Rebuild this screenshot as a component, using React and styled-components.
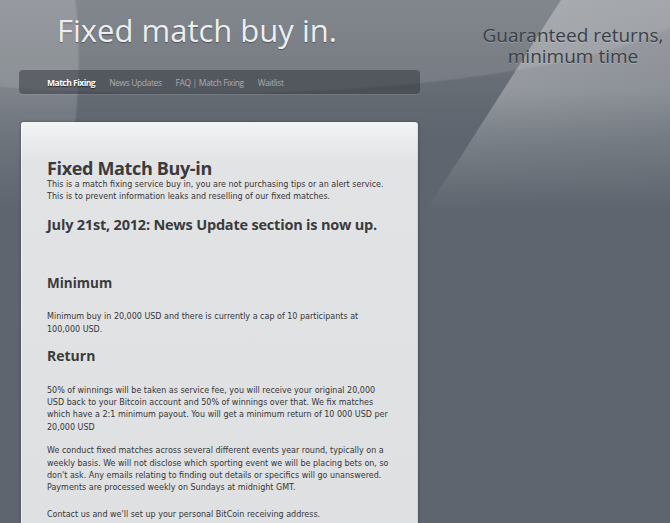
import styled, { createGlobalStyle } from "styled-components"

const GlobalStyle = createGlobalStyle`
  html, body {
    margin: 0;
    padding: 0;
  }
  body {
    min-height: 100vh;
    overflow: hidden;
    background-color: #5e656e;
    background-repeat: no-repeat;
    background-size: 670px 523px;
    background-image:
      linear-gradient(180deg, rgba(94,101,110,0) 0px, rgba(94,101,110,0) 90px, rgba(94,101,110,1) 210px),
      linear-gradient(122.6deg, rgba(255,255,255,0) 0px, rgba(255,255,255,0) 472px, rgba(255,255,255,0.3) 473px, rgba(255,255,255,0.16) 846px),
      radial-gradient(ellipse 520px 105px at 190px -10px, rgba(255,255,255,0.1) 0 98%, rgba(255,255,255,0) 100%),
      radial-gradient(ellipse 90px 230px at -10px 60px, rgba(255,255,255,0.16) 0 97%, rgba(255,255,255,0) 100%),
      linear-gradient(180deg, #747980 0px, #5e656e 140px);
  }
`

const Page = styled.div`
  display: flex;
  align-items: flex-start;
  min-height: 100vh;
`

const MainColumn = styled.div`
  width: 401px;
  margin-left: 19px;
  flex-shrink: 0;
`

const SiteTitle = styled.h1`
  margin: 0;
  padding: 10px 0 0 38px;
  height: 60px;
  box-sizing: border-box;
  font-family: "Open Sans", sans-serif;
  font-weight: 400;
  font-size: 31px;
  line-height: 40px;
  color: #eceef1;
  text-shadow: 0 1px 1px rgba(0, 0, 0, 0.35);
`

const NavBar = styled.nav`
  margin-top: 10px;
  height: 24px;
  display: flex;
  align-items: center;
  gap: 14px;
  padding-left: 28px;
  border-radius: 4px;
  background: rgba(48, 52, 58, 0.5);
  box-shadow: 0 1px 0 rgba(255, 255, 255, 0.08);
`

const NavLink = styled.a`
  font-family: "Open Sans", sans-serif;
  font-size: 8.5px;
  letter-spacing: ${(p) => (p.$active ? "-0.5px" : "-0.4px")};
  color: ${(p) => (p.$active ? "#ffffff" : "#a9adb2")};
  font-weight: ${(p) => (p.$active ? 700 : 400)};
  text-decoration: none;
  text-shadow: ${(p) => (p.$active ? "0 1px 1px rgba(0,0,0,0.6)" : "none")};
`

const Card = styled.section`
  margin: 28px 0 0 2px;
  width: 397px;
  box-sizing: border-box;
  padding: 37px 26px 20px;
  min-height: 420px;
  background: linear-gradient(180deg, #f2f3f4 0px, #e2e3e5 40px, #dfe0e2 100%);
  border-radius: 3px 3px 0 0;
  box-shadow: 0 0 3px rgba(0, 0, 0, 0.35), inset 1px 0 0 rgba(255,255,255,0.6), inset -1px 0 0 rgba(0,0,0,0.06);
  color: #3c3c3c;
`

const Heading = styled.h2`
  margin: 0;
  font-family: "Open Sans", sans-serif;
  font-weight: 700;
  font-size: ${(p) => p.$size || 18}px;
  letter-spacing: ${(p) => p.$spacing || 0}px;
  line-height: 1.1;
  color: #3a3b3d;
  margin-top: ${(p) => p.$top || 0}px;
  margin-bottom: ${(p) => p.$bottom || 0}px;
`

const Text = styled.p`
  margin: 0;
  font-family: "DejaVu Sans", sans-serif;
  font-size: 8px;
  line-height: 12.4px;
  color: #363636;
  margin-bottom: ${(p) => p.$bottom || 0}px;
`

const SideColumn = styled.div`
  flex: 1;
  margin-left: 56px;
  padding-top: 25px;
  text-align: center;
`

const Tagline = styled.p`
  margin: 0;
  font-family: "Open Sans", sans-serif;
  font-size: 19px;
  line-height: 21px;
  color: #3b4047;
  text-shadow: 0 1px 0 rgba(255, 255, 255, 0.22);
`

function App() {
  return (
    <>
      <GlobalStyle />
      <Page>
        <MainColumn>
          <SiteTitle>Fixed match buy in.</SiteTitle>
          <NavBar>
            <NavLink $active>Match Fixing</NavLink>
            <NavLink>News Updates</NavLink>
            <NavLink>FAQ | Match Fixing</NavLink>
            <NavLink>Waitlist</NavLink>
          </NavBar>
          <Card>
            <Heading $size={18} $spacing={-0.35}>Fixed Match Buy-in</Heading>
            <Text>
              This is a match fixing service buy in, you are not purchasing tips or an alert service.
              This is to prevent information leaks and reselling of our fixed matches.
            </Text>
            <Heading $size={14.5} $spacing={-0.2} $top={13}>
              July 21st, 2012: News Update section is now up.
            </Heading>
            <Heading $size={13.5} $top={43} $bottom={21}>Minimum</Heading>
            <Text>
              Minimum buy in 20,000 USD and there is currently a cap of 10 participants at 100,000 USD.
            </Text>
            <Heading $size={14} $top={12} $bottom={21}>Return</Heading>
            <Text $bottom={11}>
              50% of winnings will be taken as service fee, you will receive your original 20,000
              USD back to your Bitcoin account and 50% of winnings over that. We fix matches
              which have a 2:1 minimum payout. You will get a minimum return of 10 000 USD per
              20,000 USD
            </Text>
            <Text $bottom={14}>
              We conduct fixed matches across several different events year round, typically on a
              weekly basis. We will not disclose which sporting event we will be placing bets on, so
              don't ask. Any emails relating to finding out details or specifics will go unanswered.
              Payments are processed weekly on Sundays at midnight GMT.
            </Text>
            <Text>Contact us and we'll set up your personal BitCoin receiving address.</Text>
          </Card>
        </MainColumn>
        <SideColumn>
          <Tagline>
            Guaranteed returns,
            <br />
            minimum time
          </Tagline>
        </SideColumn>
      </Page>
    </>
  )
}

export default App
